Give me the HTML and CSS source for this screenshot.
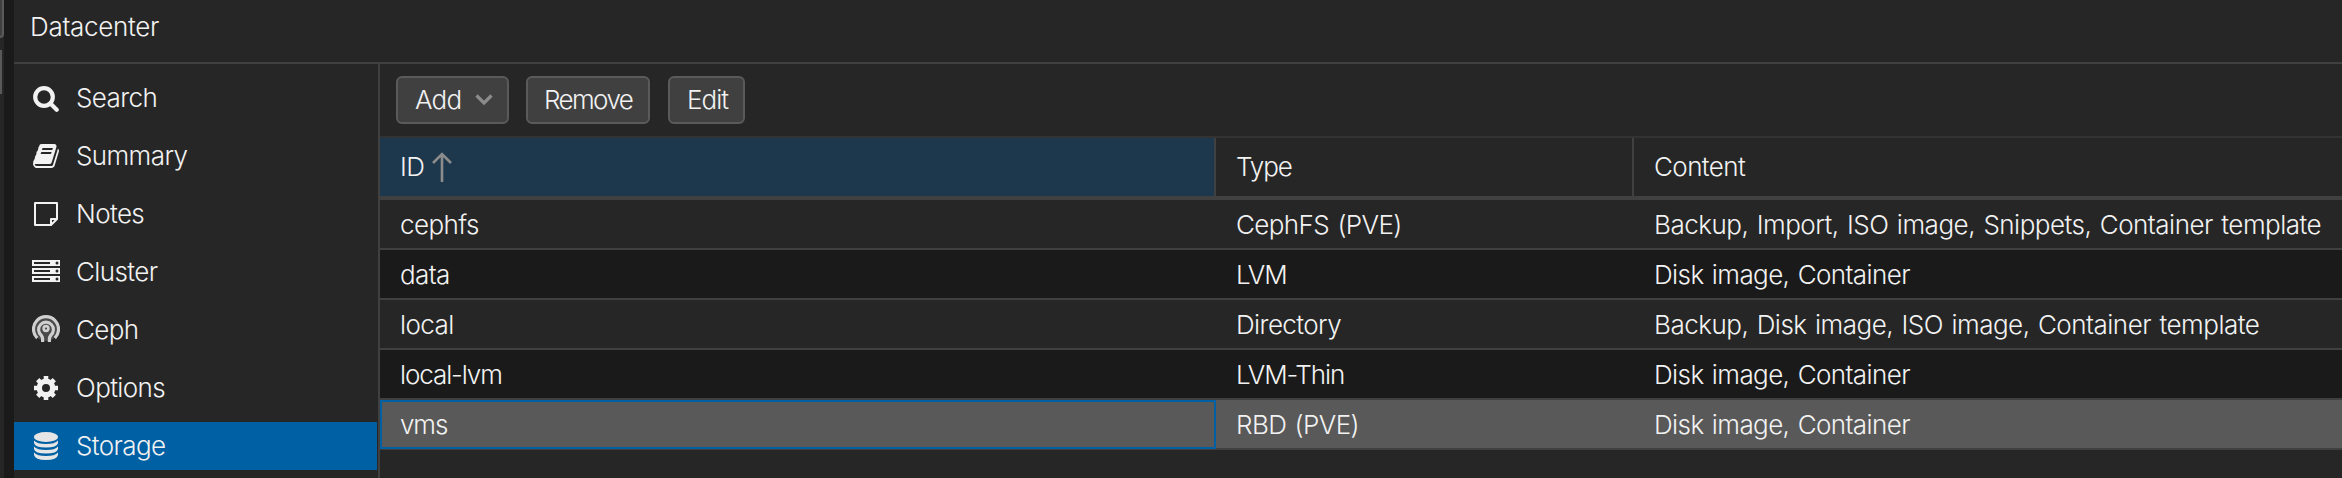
FILE: index.html
```html
<!DOCTYPE html>
<html lang="en">
<head>
<meta charset="utf-8">
<title>Datacenter</title>
<link rel="stylesheet" href="styles.css">
</head>
<body>
<div class="app">
  <aside class="edge"><div class="edge-top"></div><div class="edge-bar"></div></aside>
  <main class="panel">
    <header class="title">Datacenter</header>
    <div class="body">
      <nav class="nav">
        <a class="item"><svg class="icon" viewBox="0 0 28 28"><circle cx="12" cy="13" r="8.800" fill="none" stroke="currentColor" stroke-width="4.200"/><path d="M18.500 19.500 24.700 25.700" stroke="currentColor" stroke-width="4.200" stroke-linecap="round"/></svg><span>Search</span></a>
        <a class="item"><svg class="icon" viewBox="0 0 1664 1792"><path fill="currentColor" d="M1639 478q40 57 18 129l-275 906q-19 64-76.500 107.500t-122.500 43.500h-923q-77 0-148.500-53.500t-99.500-131.500q-24-67-2-127 0-4 3-27t4-37q1-8-3-21.500t-3-19.500q2-11 8-21t16.500-23.500 16.500-23.500q23-38 45-91.500t30-91.500q3-10 .5-30t-.5-28q3-11 17-28t17-23q21-36 42-92t25-90q1-9-2.500-32t.5-28q4-13 22-30.500t22-22.500q19-26 42.500-84.500t27.500-96.500q1-8-3-25.500t-2-26.500q2-8 9-18t18-23 17-21q8-12 16.500-30.500t15-35 16-36 19.500-32 26.500-23.500 36-11.500 47.500 5.500l-1 3q38-9 51-9h761q74 0 114 56t18 130l-274 906q-36 119-71.500 153.500t-128.500 34.500h-869q-27 0-38 15-11 16-1 43 24 70 144 70h923q29 0 56-15.500t35-41.500l300-987q7-22 5-57 38 15 59 43zm-1064 2q-4 13 2 22.500t20 9.500h608q13 0 25.500-9.500t16.500-22.500l21-64q4-13-2-22.500t-20-9.500h-608q-13 0-25.500 9.500t-16.500 22.500zm-83 256q-4 13 2 22.500t20 9.500h608q13 0 25.500-9.500t16.500-22.500l21-64q4-13-2-22.500t-20-9.500h-608q-13 0-25.500 9.500t-16.500 22.500z"/></svg><span>Summary</span></a>
        <a class="item"><svg class="icon" viewBox="0 0 28 28"><path d="M3 3H25V19L19 25H3ZM25 19H19V25" fill="none" stroke="currentColor" stroke-width="2" stroke-linejoin="round"/></svg><span>Notes</span></a>
        <a class="item"><svg class="icon" viewBox="0 0 28 28"><path fill="currentColor" fill-rule="evenodd" d="M0 2H28V8H0ZM2 4V6H18V4ZM0 10H28V16H0ZM2 12V14H18V12ZM0 18H28V24H0ZM2 20V22H18V20Z"/><g class="hole"><circle cx="25" cy="5" r="1.500"/><circle cx="25" cy="13" r="1.500"/><circle cx="25" cy="21" r="1.500"/></g></svg><span>Cluster</span></a>
        <a class="item"><svg class="icon ceph" viewBox="0 0 28 28"><circle class="haze" cx="14" cy="14" r="13"/><g fill="none" stroke="currentColor" stroke-width="3.200"><path d="M5.200 24A12.500 12.500 0 1 1 22.800 24"/><path d="M10.600 28V25Q10.600 23 9.200 21.200A7.400 7.400 0 1 1 18.800 21.200Q17.400 23 17.400 25V28"/><circle cx="14" cy="14.500" r="2.400" stroke-width="2.600"/></g></svg><span>Ceph</span></a>
        <a class="item"><svg class="icon" viewBox="0 0 28 28"><circle cx="14" cy="14" r="6.700" fill="none" stroke="currentColor" stroke-width="5.400"/><g stroke="currentColor" stroke-width="4.600"><path d="M14 2V7M14 21V26M2 14H7M21 14H26M5.700 5.700 9 9M19 19 22.300 22.300M22.300 5.700 19 9M9 19 5.700 22.300"/></g></svg><span>Options</span></a>
        <a class="item selected"><svg class="icon disks" viewBox="0 0 28 28"><g fill="currentColor"><ellipse cx="14" cy="5" rx="12" ry="5"/><path d="M2 8.500Q5 12 14 12T26 8.500V11Q25 15.500 14 15.500T2 11Z"/><path d="M2 14.500Q5 18 14 18T26 14.500V17Q25 21.500 14 21.500T2 17Z"/><path d="M2 20.500Q5 24 14 24T26 20.500V23Q25 28 14 28T2 23Z"/></g></svg><span>Storage</span></a>
      </nav>
      <section class="content">
        <div class="toolbar">
          <button class="btn add">Add<svg class="chev" viewBox="0 0 18 12"><path d="M1.500 1.500 9 9 16.500 1.500" fill="none" stroke="currentColor" stroke-width="3.200"/></svg></button>
          <button class="btn remove">Remove</button>
          <button class="btn edit">Edit</button>
        </div>
        <div class="row head">
          <div class="cell sorted">ID<svg class="arrow" viewBox="0 0 20 30"><path d="M10 30V2M1 11 10 2 19 11" fill="none" stroke="currentColor" stroke-width="2.600"/></svg></div>
          <div class="cell tight">Type</div><div class="cell">Content</div>
        </div>
        <div class="row"><div class="cell">cephfs</div><div class="cell">CephFS (PVE)</div><div class="cell wide">Backup, Import, ISO image, Snippets, Container template</div></div>
        <div class="row alt"><div class="cell">data</div><div class="cell tight">LVM</div><div class="cell">Disk image, Container</div></div>
        <div class="row"><div class="cell">local</div><div class="cell">Directory</div><div class="cell wide">Backup, Disk image, ISO image, Container template</div></div>
        <div class="row alt"><div class="cell tight">local-lvm</div><div class="cell tight">LVM-Thin</div><div class="cell">Disk image, Container</div></div>
        <div class="row active"><div class="cell focus tight">vms</div><div class="cell">RBD (PVE)</div><div class="cell">Disk image, Container</div></div>
      </section>
    </div>
  </main>
</div>
</body>
</html>
```
FILE: styles.css
```css
* { box-sizing: border-box; }
body {
  margin: 0;
  background: #262626;
  color: #f2f2f2;
  font: 300 26px/48px Inter, "Liberation Sans", sans-serif;
  letter-spacing: -0.6px;
  word-spacing: 1.6px;
}
.app { display: flex; height: 478px; overflow: hidden; }
.edge { width: 14px; flex: none; background: linear-gradient(90deg, #262626 4px, #1a1a1a 4px); }
.edge-top { width: 4px; height: 38px; background: #404040; border-right: 2px solid #595959; border-bottom: 2px solid #595959; border-bottom-right-radius: 4px; }
.edge-bar { width: 2px; height: 44px; margin-top: 12px; background: #595959; }
.panel { flex: 1; min-width: 0; display: flex; flex-direction: column; }
.title { height: 64px; padding: 3px 16px; border-bottom: 2px solid #404040; letter-spacing: -0.3px; }
.body { flex: 1; display: flex; min-height: 0; }
.nav { width: 366px; flex: none; padding: 10px 1px 0 0; border-right: 2px solid #404040; display: flex; flex-direction: column; gap: 10px; }
.item { height: 48px; flex: none; display: flex; align-items: center; gap: 16px; padding-left: 18px; }
.selected { background: #0060a4; }
.icon { width: 28px; height: 28px; flex: none; }
.hole { fill: #262626; }
.ceph { color: #cfcfcf; margin-bottom: 4px; }
.haze { fill: #4a4a4a; }
.disks { color: #e6e6e6; }
.content { flex: 1; min-width: 0; }
.toolbar { height: 74px; padding: 12px 16px; display: flex; border-bottom: 2px solid #333; }
.btn { height: 48px; padding: 0 0 0 17px; border: 2px solid #5a5a5a; border-radius: 6px; background: #404040; color: inherit; font: inherit; line-height: 44px; letter-spacing: -0.8px; display: flex; align-items: center; }
.add { width: 113px; margin-right: 17px; }
.remove { width: 124px; margin-right: 18px; padding-left: 16px; letter-spacing: -1.6px; }
.edit { width: 77px; letter-spacing: -1px; }
.chev { width: 18px; height: 12px; margin-left: 14px; color: #8c8c8c; }
.row { height: 50px; display: grid; grid-template-columns: 836px 418px 1fr; border-bottom: 2px solid #404040; }
.cell { padding: 1px 0 0 20px; white-space: nowrap; }
.head { height: 62px; border-bottom-width: 4px; line-height: 58px; }
.head .cell { padding-top: 0; }
.head .cell:not(:last-child) { border-right: 2px solid #404040; }
.sorted { background: #1d384d; display: flex; align-items: center; }
.arrow { width: 20px; height: 30px; margin-left: 8px; color: #8c8c8c; }
.alt { background: #1a1a1a; }
.active { background: #595959; }
.focus { border: 2px solid #0060a4; padding-left: 18px; line-height: 44px; }
.tight { letter-spacing: -1.1px; }
.wide { letter-spacing: -0.5px; }
```
